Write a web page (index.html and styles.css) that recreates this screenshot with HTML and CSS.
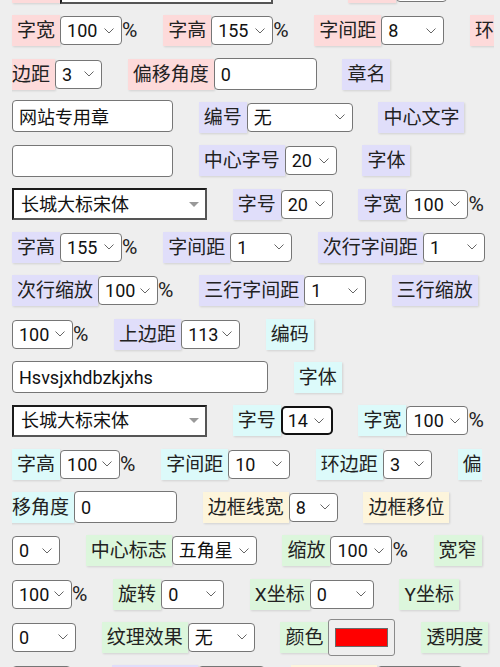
FILE: index.html
```html
<!DOCTYPE html>
<html lang="zh-CN">
<head>
  <meta charset="UTF-8">
  <title>印章设置</title>
  <link rel="stylesheet" href="styles.css">
</head>
<body>
<div class="panel">
<span class="field"><span class="tag red">字体</span><select class="font-pick w213"><option>方正小标宋简体</option><option>长城大标宋体</option></select></span>
<input type="checkbox" class="tick" title="加粗">
<span class="field"><span class="tag red">字号</span><select class="w51"><option>22</option></select></span>
<span class="field"><span class="tag red">字宽</span><select class="w62"><option>100</option></select><span class="unit">%</span></span>
<span class="field"><span class="tag red">字高</span><select class="w62"><option>155</option></select><span class="unit">%</span></span>
<span class="field"><span class="tag red">字间距</span><select class="w63"><option>8</option></select></span>
<span class="field"><span class="tag red">环边距</span><select class="w47"><option>3</option></select></span>
<span class="field"><span class="tag red">偏移角度</span><input type="text" class="w103" value="0"></span>
<span class="field"><span class="tag blue">章名</span><input type="text" class="w161" value="网站专用章"></span>
<span class="field"><span class="tag blue">编号</span><select class="w106"><option>无</option><option>有</option></select></span>
<span class="field"><span class="tag blue">中心文字</span><input type="text" class="w161" value=""></span>
<span class="field"><span class="tag blue">中心字号</span><select class="w52"><option>20</option></select></span>
<span class="field"><span class="tag blue">字体</span><select class="font-pick w195"><option>长城大标宋体</option></select></span>
<span class="field"><span class="tag blue">字号</span><select class="w52"><option>20</option></select></span>
<span class="field"><span class="tag blue">字宽</span><select class="w62"><option>100</option></select><span class="unit">%</span></span>
<span class="field"><span class="tag blue">字高</span><select class="w62"><option>155</option></select><span class="unit">%</span></span>
<span class="field"><span class="tag blue">字间距</span><select class="w62"><option>1</option></select></span>
<span class="field"><span class="tag blue">次行字间距</span><select class="w62"><option>1</option></select></span>
<span class="field"><span class="tag blue">次行缩放</span><select class="w60"><option>100</option></select><span class="unit">%</span></span>
<span class="field"><span class="tag blue">三行字间距</span><select class="w62"><option>1</option></select></span>
<span class="field"><span class="tag blue">三行缩放</span><select class="w61"><option>100</option></select><span class="unit">%</span></span>
<span class="field"><span class="tag blue">上边距</span><select class="w59"><option>113</option></select></span>
<span class="field"><span class="tag cyan">编码</span><input type="text" class="w256" value="Hsvsjxhdbzkjxhs"></span>
<span class="field"><span class="tag cyan">字体</span><select class="font-pick w195"><option>长城大标宋体</option></select></span>
<span class="field"><span class="tag cyan">字号</span><select class="w52 on"><option>14</option></select></span>
<span class="field"><span class="tag cyan">字宽</span><select class="w62"><option>100</option></select><span class="unit">%</span></span>
<span class="field"><span class="tag cyan">字高</span><select class="w60"><option>100</option></select><span class="unit">%</span></span>
<span class="field"><span class="tag cyan">字间距</span><select class="w62"><option>10</option></select></span>
<span class="field"><span class="tag cyan">环边距</span><select class="w49"><option>3</option></select></span>
<span class="field"><span class="tag cyan">偏移角度</span><input type="text" class="w103" value="0"></span>
<span class="field"><span class="tag yellow">边框线宽</span><select class="w49"><option>8</option></select></span>
<span class="field"><span class="tag yellow">边框移位</span><select class="w48"><option>0</option></select></span>
<span class="field"><span class="tag green">中心标志</span><select class="w85"><option>五角星</option><option>无</option></select></span>
<span class="field"><span class="tag green">缩放</span><select class="w62"><option>100</option></select><span class="unit">%</span></span>
<span class="field"><span class="tag green">宽窄</span><select class="w60"><option>100</option></select><span class="unit">%</span></span>
<span class="field"><span class="tag green">旋转</span><select class="w63"><option>0</option></select></span>
<span class="field"><span class="tag green">X坐标</span><select class="w64"><option>0</option></select></span>
<span class="field"><span class="tag green">Y坐标</span><select class="w64"><option>0</option></select></span>
<span class="field"><span class="tag green">纹理效果</span><select class="w67"><option>无</option></select></span>
<span class="field"><span class="tag green">颜色</span><input type="color" class="swatch" value="#ff0000"></span>
<span class="field"><span class="tag green">透明度</span><select class="w59"><option>100</option></select><span class="unit">%</span></span>
<span class="field"><span class="tag blue">内圈线宽</span><select class="w67"><option>1</option></select></span>
<span class="field"><span class="tag yellow">内圈移位</span><select class="w86"><option>0</option></select></span>
</div>

<script>
  window.scrollTo(0, 34);
</script>
</body>
</html>
```

FILE: styles.css
```css
html {
  scrollbar-width: none;
}
body {
  margin: 0;
  background: #eeeeee;
  color: #222;
  font-family: Roboto, "Noto Sans CJK SC", sans-serif;
}
.panel {
  padding: 0 5px 24px 12px;
  font-size: 19px;
  line-height: 43.33px;
  word-spacing: 21px;
}

/* coloured label in front of each control */
.tag {
  padding: 4px 5px;
  box-shadow: 1px 1px 2px rgba(0, 0, 0, 0.12);
}
.red { background: #fddada; }
.blue { background: #e0defa; }
.cyan { background: #dcfafa; }
.yellow { background: #fdf5dc; }
.green { background: #dcf6dc; }

.unit {
  font-size: 21px;
}

select,
input {
  box-sizing: border-box;
  margin: 0;
  font-family: Roboto, "Noto Sans CJK SC", sans-serif;
  font-size: 18px;
  color: #111;
}
select {
  appearance: none;
  height: 29px;
  padding: 0 16px 0 6px;
  border: 1px solid #767676;
  border-radius: 4px;
  background: #fff url("data:image/svg+xml,%3Csvg xmlns='http://www.w3.org/2000/svg' width='10' height='6'%3E%3Cpath d='M0.5 0.5l4.5 4.5 4.5-4.5' fill='none' stroke='%23666' stroke-width='1'/%3E%3C/svg%3E") no-repeat right 7px center;
}
select.on {
  border: 2px solid #111;
  border-radius: 5px;
  padding-left: 5px;
}
select.font-pick {
  height: 32px;
  padding-left: 7px;
  border: 2px solid #555;
  border-top-color: #1c1c1c;
  border-left-color: #1c1c1c;
  border-radius: 0;
  background: #fff url("data:image/svg+xml,%3Csvg xmlns='http://www.w3.org/2000/svg' width='10' height='5'%3E%3Cpath d='M0 0h10l-5 5z' fill='%23999'/%3E%3C/svg%3E") no-repeat right 6px center;
}
.tick {
  width: 20px;
  margin: 0 2px;
}
input[type="text"] {
  height: 32px;
  padding: 0 6px;
  border: 1px solid #767676;
  border-radius: 4px;
  background: #fff;
}
.swatch {
  width: 67px;
  height: 37px;
  padding: 0;
  border: 1px solid #8a8a8a;
  border-radius: 3px;
  background: #efefef;
  vertical-align: -3px;
}
.swatch::-webkit-color-swatch-wrapper {
  padding: 8px 6px;
}
.swatch::-webkit-color-swatch {
  border: 1px solid #6a6a6a;
  border-radius: 0;
}

.w47 { width: 47px; }
.w48 { width: 48px; }
.w49 { width: 49px; }
.w51 { width: 51px; }
.w52 { width: 52px; }
.w59 { width: 59px; }
.w60 { width: 60px; }
.w61 { width: 61px; }
.w62 { width: 62px; }
.w63 { width: 63px; }
.w64 { width: 64px; }
.w67 { width: 67px; }
.w85 { width: 85px; }
.w86 { width: 86px; }
.w103 { width: 103px; }
.w106 { width: 106px; }
.w161 { width: 161px; }
.w195 { width: 195px; }
.w213 { width: 213px; }
.w256 { width: 256px; }
```
